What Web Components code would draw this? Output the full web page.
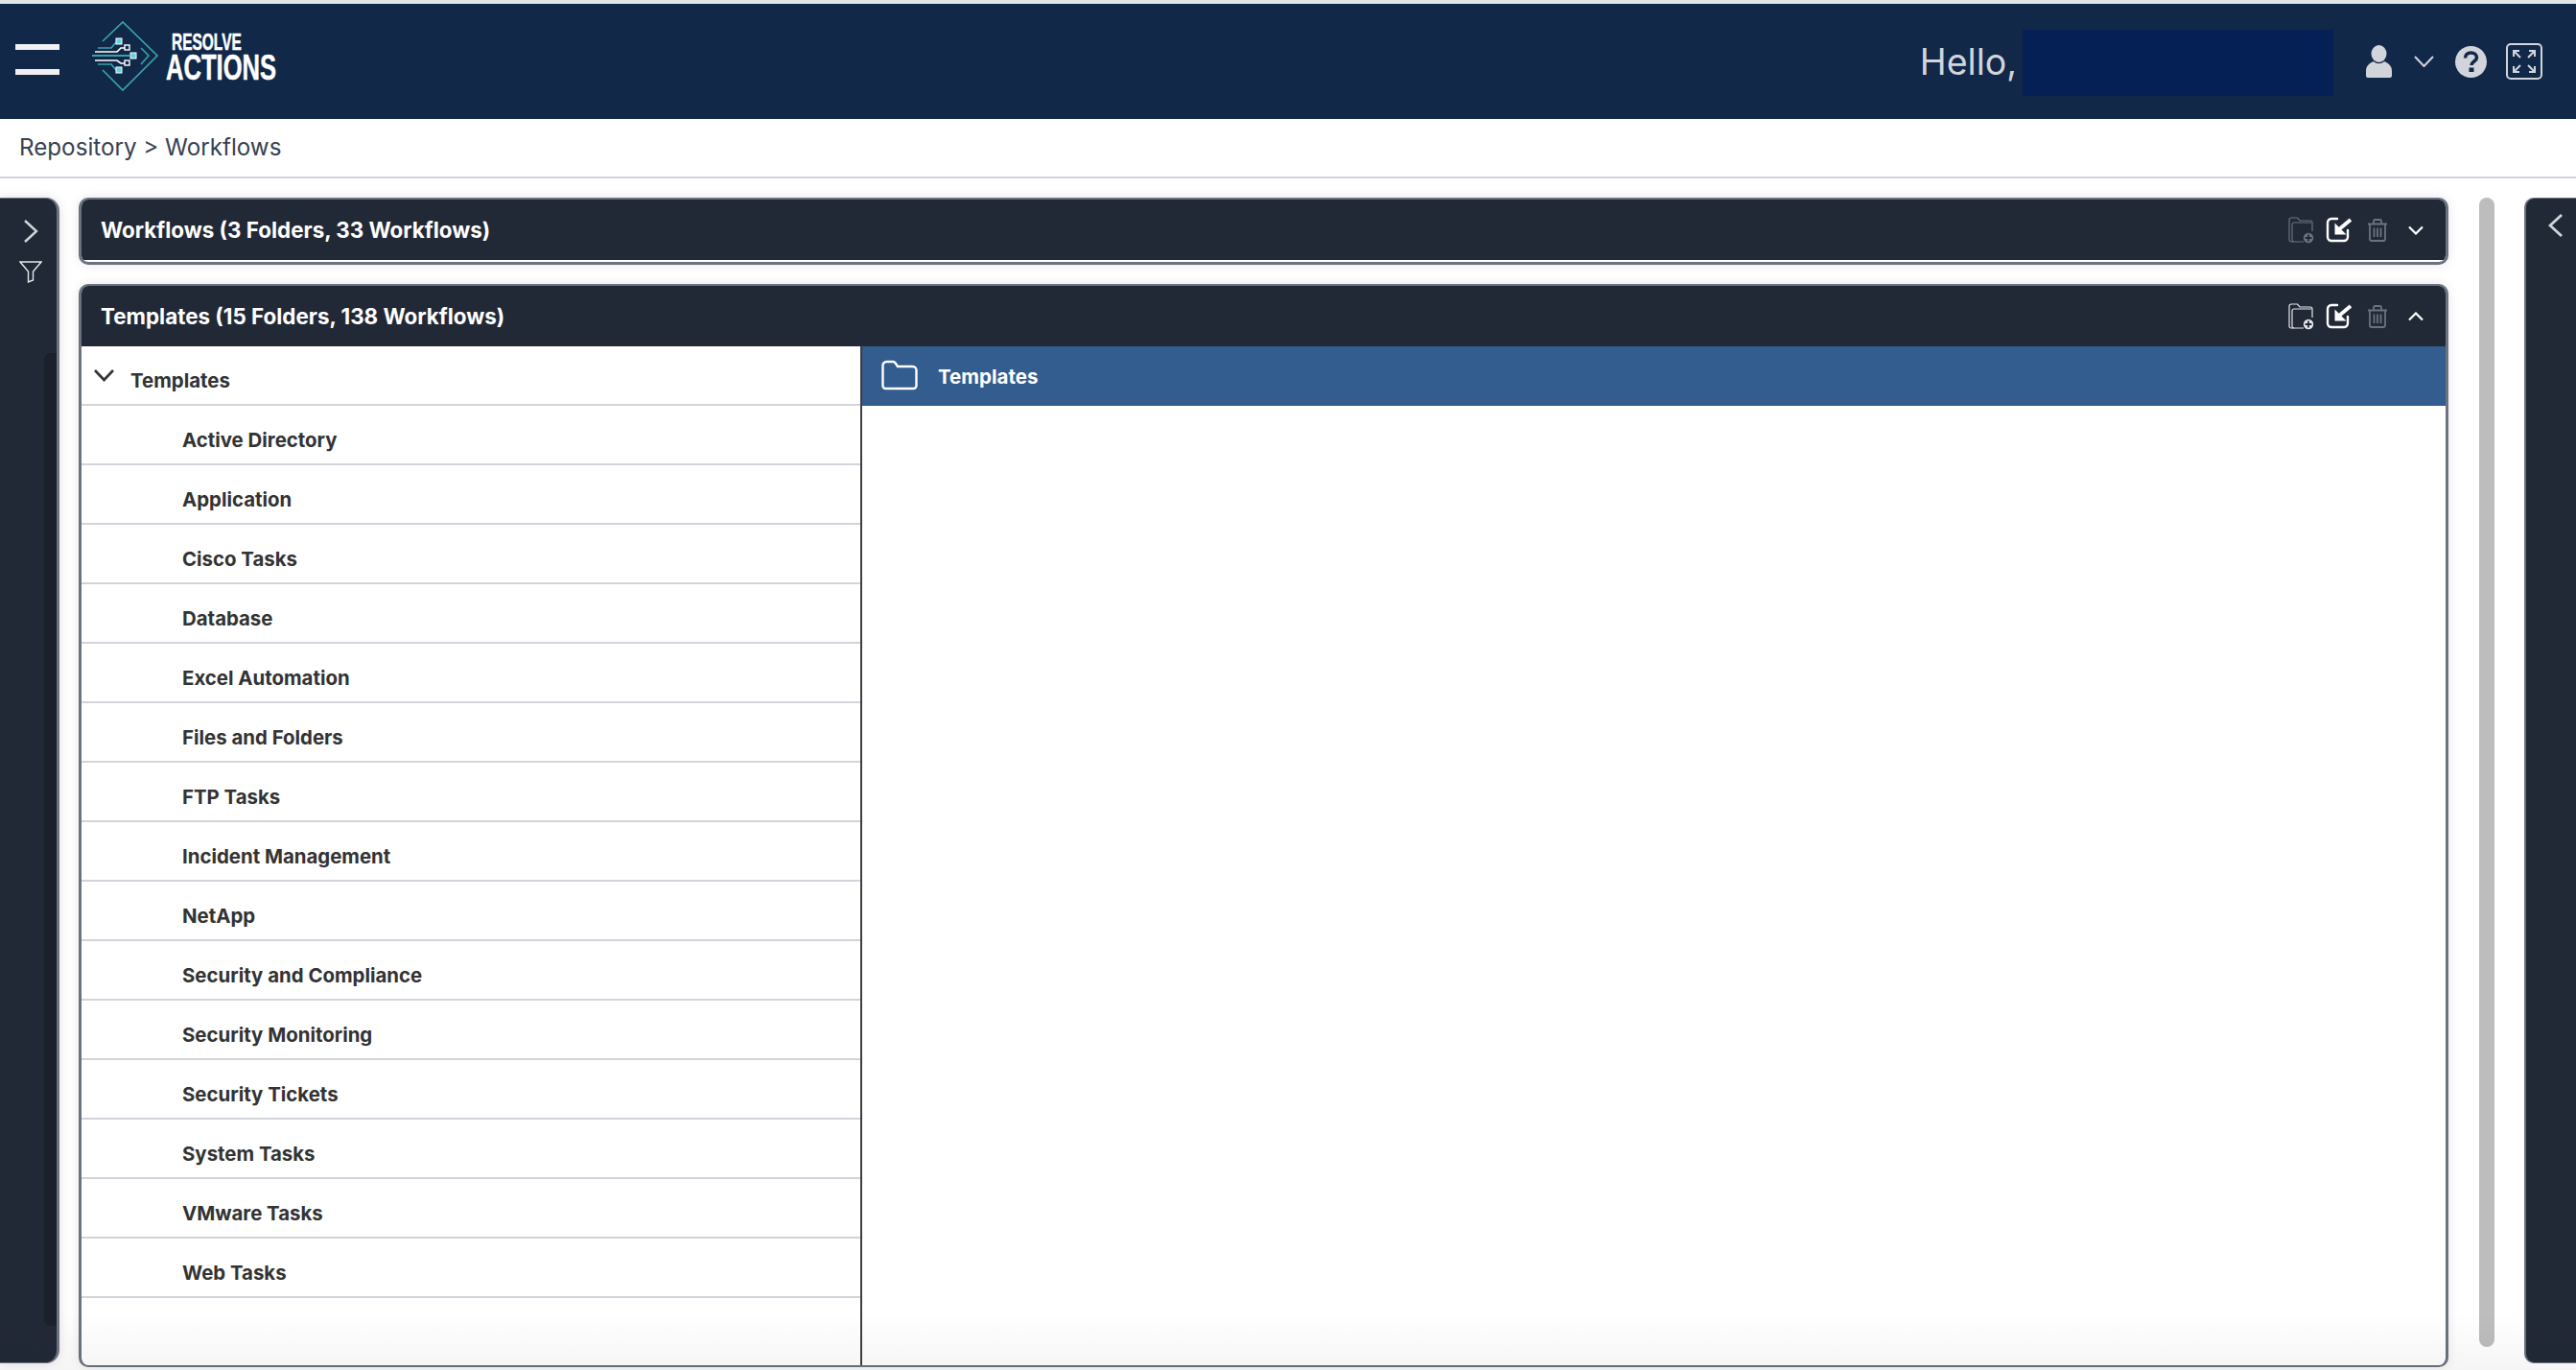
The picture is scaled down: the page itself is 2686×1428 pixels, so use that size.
<!DOCTYPE html>
<html lang="en">
<head>
<meta charset="utf-8">
<title>Repository - Workflows</title>
<style>
  html, body { margin: 0; height: 100%; background: #fff; }
  body { overflow: hidden; font-family: Inter, "Liberation Sans", sans-serif; }
</style>
</head>
<body>
<app-shell>
  <top-bar slot="top"></top-bar>
  <bread-crumb slot="top">Repository &gt; Workflows</bread-crumb>
  <side-rail slot="left" side="left"></side-rail>
  <repo-panel slot="main" collapsed label="Workflows (3 Folders, 33 Workflows)"></repo-panel>
  <repo-panel slot="main" label="Templates (15 Folders, 138 Workflows)">
    <folder-tree slot="tree" label="Templates">
      <tree-row>Active Directory</tree-row>
      <tree-row>Application</tree-row>
      <tree-row>Cisco Tasks</tree-row>
      <tree-row>Database</tree-row>
      <tree-row>Excel Automation</tree-row>
      <tree-row>Files and Folders</tree-row>
      <tree-row>FTP Tasks</tree-row>
      <tree-row>Incident Management</tree-row>
      <tree-row>NetApp</tree-row>
      <tree-row>Security and Compliance</tree-row>
      <tree-row>Security Monitoring</tree-row>
      <tree-row>Security Tickets</tree-row>
      <tree-row>System Tasks</tree-row>
      <tree-row>VMware Tasks</tree-row>
      <tree-row>Web Tasks</tree-row>
    </folder-tree>
    <folder-view slot="view" label="Templates"></folder-view>
  </repo-panel>
  <side-rail slot="right" side="right"></side-rail>
</app-shell>

<script>
// small helper, every element just stamps its own template into an open root
function stamp(el, html) {
  const tmpl = document.createElement("template");
  tmpl.innerHTML = html;
  el.attachShadow({ mode: "open" });
  el.shadowRoot.appendChild(tmpl.content.cloneNode(true));
}

const folderPlus = `<svg width="28" height="28" viewBox="0 0 28 28" fill="none" stroke="currentColor" stroke-width="1.2">
  <path d="M17 26H4a2 2 0 0 1-2-2V3a2 2 0 0 1 2-2h6.5l2.5 3h11a2 2 0 0 1 2 2v9"/>
  <path d="M7 26a2 2 0 0 1-2-2V8a2 2 0 0 1 2-2h18"/>
  <circle cx="22" cy="22" r="5.2" fill="currentColor" stroke="none"/>
  <path d="M22 18.6v6.8M18.6 22h6.8" stroke="#222936" stroke-width="1.8"/>
</svg>`;

const importIcon = `<svg width="28" height="28" viewBox="0 0 28 28" fill="none" stroke="#fff" stroke-width="2.4">
  <path d="M12 2H6a4 4 0 0 0-4 4v15a4 4 0 0 0 4 4h13a4 4 0 0 0 4-4v-7" stroke-linecap="round"/>
  <path d="M14 13L26 3" stroke-width="3.8"/>
  <path d="M9.500 6.500v12h12z" fill="#fff" stroke="none"/>
</svg>`;

const trashIcon = `<svg width="24" height="26" viewBox="0 0 24 26" fill="none" stroke="#6b7280" stroke-width="1.8">
  <path d="M2 6.500h20M8 6V3.500a1.500 1.500 0 0 1 1.500-1.500h5A1.500 1.500 0 0 1 16 3.500V6" />
  <path d="M4 6.500V22a2 2 0 0 0 2 2h12a2 2 0 0 0 2-2V6.500"/>
  <path d="M8.500 10.500V20M12 10.500V20M15.500 10.500V20"/>
</svg>`;

class AppShell extends HTMLElement {
  constructor() {
    super();
    stamp(this, `
      <style>
        :host { display: flex; flex-direction: column; height: 100vh; position: relative; overflow: hidden; }
        .body { flex: 1; min-height: 0; display: flex; padding-top: 20px; }
        .left { display: block; width: 62px; flex: none; }
        .main { width: 2471px; margin-left: 20px; flex: none; display: flex; flex-direction: column; gap: 20px; padding-bottom: 3px; box-sizing: border-box; }
        .bar { width: 16px; height: 1198px; margin-left: 32px; flex: none; border-radius: 8px; background: #bdbdbd; }
        .right { margin-left: 31px; flex: 1; }
        .fade { position: absolute; left: 0; right: 0; bottom: 0; height: 60px; pointer-events: none;
          background: linear-gradient(rgba(0,0,0,0), rgba(0,0,0,.04)); }
      </style>
      <slot name="top"></slot>
      <div class="body">
        <div class="left"><slot name="left"></slot></div>
        <div class="main"><slot name="main"></slot></div>
        <div class="bar"></div>
        <div class="right"><slot name="right"></slot></div>
      </div>
      <div class="fade"></div>`);
  }
}

class TopBar extends HTMLElement {
  constructor() {
    super();
    stamp(this, `
      <style>
        :host { display: flex; align-items: center; height: 120px; border-top: 4px solid #e3e3e3; background: #112848; color: #d1d5db; flex: none; }
        .burger { width: 46px; height: 32px; margin-left: 16px; flex: none; border-top: 6px solid #eef0f2; border-bottom: 6px solid #eef0f2; box-sizing: border-box; margin-top: -4px; }
        .mark { margin: -12px 0 0 33px; flex: none; display: block; }
        .word { margin-left: 6px; width: 120px; color: #fff; font-family: "Liberation Sans", sans-serif; font-weight: 700; margin-top: -9px; -webkit-text-stroke: .5px #fff; }
        .word div { transform-origin: left center; white-space: nowrap; }
        .r { font-size: 24px; line-height: 22px; transform: scaleX(.645); margin-left: 6px; }
        .a { font-size: 36px; line-height: 30px; transform: scaleX(.71); margin-top: 1px; }
        .hello { margin-left: auto; font-size: 37.500px; font-weight: 400; line-height: 1; margin-top: 2px; }
        .who { width: 324px; height: 69px; margin-left: 6px; background: #052055; margin-top: 3px; }
        .ic { display: block; flex: none; }
      </style>
      <div class="burger"></div>
      <svg class="mark" width="72" height="76" viewBox="0 0 72 76" fill="none" stroke="#36a3aa" stroke-width="1.7">
        <path d="M12 23L33 3L69 38L33 74L12 53"/>
        <path d="M52 30l8 8-8 9" stroke-width="1.6"/>
        <path d="M1 38H40" stroke-width="2"/>
        <path d="M4 34H27l4-4h4M4 43H27l4 3h4" stroke="#fff"/>
        <path d="M7 30H21l5-6M7 47H21l5 6"/>
        <rect x="26" y="20" width="6" height="6" fill="#5fd3dc" stroke="#fff" stroke-width="1"/>
        <rect x="26" y="50" width="6" height="6" fill="#5fd3dc" stroke="#fff" stroke-width="1"/>
        <rect x="41" y="35" width="6" height="6" fill="#5fd3dc" stroke="#fff" stroke-width="1"/>
        <rect x="35" y="27" width="5" height="5" stroke="#fff" stroke-width="1.4"/>
        <rect x="35" y="43" width="5" height="5" stroke="#fff" stroke-width="1.4"/>
      </svg>
      <div class="word"><div class="r">RESOLVE</div><div class="a">ACTIONS</div></div>
      <div class="hello">Hello,</div>
      <div class="who"></div>
      <svg class="ic" style="margin-left:34px" width="27" height="34" viewBox="0 0 27 34" fill="#d1d5db">
        <ellipse cx="13.500" cy="9" rx="8" ry="9"/>
        <path d="M8 17c-5 2-8 5-8 10v5a2 2 0 0 0 2 2h23a2 2 0 0 0 2-2v-5c0-5-3-8-8-10-3 3-8 3-11 0z"/>
      </svg>
      <svg class="ic" style="margin-left:23px" width="21" height="12" viewBox="0 0 21 12" fill="none" stroke="#d1d5db" stroke-width="2"><path d="M1 1l9.500 10L20 1"/></svg>
      <svg class="ic" style="margin-left:22px" width="33" height="33" viewBox="0 0 33 33">
        <circle cx="16.500" cy="16.500" r="16.500" fill="#d1d5db"/>
        <path d="M10.500 12.500c0-3.500 2.700-5.500 6-5.500s6 2 6 5c0 4-5.500 4-5.500 8" fill="none" stroke="#112848" stroke-width="3.600"/>
        <rect x="14.500" y="22.500" width="5" height="4.500" fill="#112848"/>
      </svg>
      <svg class="ic" style="margin:0 35px 0 20px" width="38" height="38" viewBox="0 0 38 38" fill="none" stroke="#d1d5db" stroke-width="2">
        <rect x="1" y="1" width="36" height="36" rx="4"/>
        <path d="M8 8l7 7M8 14V8h6M30 8l-7 7M30 14V8h-6M8 30l7-7M8 24v6h6M30 30l-7-7M30 24v6h-6"/>
      </svg>`);
  }
}

class BreadCrumb extends HTMLElement {
  constructor() {
    super();
    stamp(this, `
      <style>
        :host { display: flex; align-items: center; flex: none; padding: 0 0 2px 20px; box-sizing: border-box;
          border-bottom: 2px solid #d1d5db; height: 62px; font-size: 24.200px; color: #374151; }
      </style>
      <slot></slot>`);
  }
}

class SideRail extends HTMLElement {
  constructor() {
    super();
    const left = this.getAttribute("side") === "left";
    stamp(this, left ? `
      <style>
        :host { display: block; position: relative; height: 1215px; box-sizing: border-box; padding-top: 22px; background: #222936;
          border-right: 3px solid #6b7280; border-top: 1px solid #6b7280; border-bottom: 1px solid #6b7280; border-radius: 0 14px 14px 0; box-shadow: 0 0 12px rgba(0,0,0,.12); }
        svg { display: block; }
        .chev { margin-left: 24px; }
        .filter { margin: 19px 0 0 20px; }
        .thumb { position: absolute; left: 46px; top: 161px; width: 13px; height: 1014px; border-radius: 7px 0 0 7px; background: #1a212b; }
      </style>
      <svg class="chev" width="16" height="24" viewBox="0 0 16 24" fill="none" stroke="#d1d5db" stroke-width="2.400"><path d="M2 1l12 11L2 23"/></svg>
      <svg class="filter" width="24" height="23" viewBox="0 0 24 23" fill="none" stroke="#e5e7eb" stroke-width="1.400"><path d="M1 1h22l-8.500 10v9l-5 2V11z"/></svg>
      <div class="thumb"></div>` : `
      <style>
        :host { display: block; height: 1215px; box-sizing: border-box; padding-top: 16px; background: #222936;
          border-left: 2px solid #6b7280; border-top: 1px solid #6b7280; border-bottom: 1px solid #6b7280; border-radius: 10px 0 0 10px; }
        svg { display: block; margin-left: 23px; }
      </style>
      <svg width="16" height="24" viewBox="0 0 16 24" fill="none" stroke="#d1d5db" stroke-width="2.800"><path d="M14 1L2 12l12 11"/></svg>`);
  }
}

class RepoPanel extends HTMLElement {
  constructor() {
    super();
    const collapsed = this.hasAttribute("collapsed");
    stamp(this, `
      <style>
        :host { display: flex; flex-direction: column; box-sizing: border-box; border: 3px solid #6b7280; border-top-width: 2px; border-radius: 10px;
          background: #fff; box-shadow: 0 0 12px rgba(0,0,0,.1); overflow: hidden; flex: none; }
        :host(:not([collapsed])) { flex: 1; min-height: 0; border-bottom-width: 2px; }
        .head { display: flex; align-items: center; height: 63px; flex: none; padding: 0 23px 0 20px; background: #222936; color: #fff;
          font-size: 22.400px; font-weight: 700; }
        :host([collapsed]) .head { border-bottom: 2px solid #fff; box-sizing: content-box; }
        .title { flex: 1; }
        .dim { color: #6b7280; }
        .lit { color: #e5e7eb; }
        svg { display: block; flex: none; }
        .body { flex: 1; min-height: 0; display: flex; }
        .tree { display: block; width: 812px; flex: none; border-right: 2px solid #3f3f3f; }
        .view { display: block; flex: 1; }
      </style>
      <div class="head">
        <div class="title">${this.getAttribute("label")}</div>
        <span class="${collapsed ? "dim" : "lit"}">${folderPlus}</span>
        <span style="margin-left:12px">${importIcon}</span>
        <span style="margin-left:14px">${trashIcon}</span>
        <svg style="margin-left:20px" width="16" height="10" viewBox="0 0 16 10" fill="none" stroke="#fff" stroke-width="2.200"><path d="${collapsed ? "M1 1.500l7 7 7-7" : "M1 8.500l7-7 7 7"}"/></svg>
      </div>
      ${collapsed ? "" : `<div class="body">
        <div class="tree"><slot name="tree"></slot></div>
        <div class="view"><slot name="view"></slot></div>
      </div>`}`);
  }
}

class FolderTree extends HTMLElement {
  constructor() {
    super();
    stamp(this, `
      <style>
        :host { display: block; color: #333; font-size: 20.400px; font-weight: 650; }
        .root { display: flex; align-items: center; height: 60px; border-bottom: 2px solid #d1d5db; padding-left: 13px; }
        svg { display: block; margin-right: 17px; }
        span { margin-top: 10px; }
      </style>
      <div class="root">
        <svg width="21" height="13" viewBox="0 0 21 13" fill="none" stroke="#333" stroke-width="2.600"><path d="M1 1l9.500 10L20 1"/></svg>
        <span>${this.getAttribute("label")}</span>
      </div>
      <slot></slot>`);
  }
}

class TreeRow extends HTMLElement {
  constructor() {
    super();
    stamp(this, `
      <style>
        :host { display: flex; align-items: center; height: 62px; box-sizing: border-box; padding: 10px 0 0 105px; border-bottom: 2px solid #d1d5db; }
      </style>
      <slot></slot>`);
  }
}

class FolderView extends HTMLElement {
  constructor() {
    super();
    stamp(this, `
      <style>
        :host { display: block; }
        .crumb { display: flex; align-items: center; height: 62px; padding-left: 20px; background: #335c8f; color: #fff; font-size: 20.500px; font-weight: 700; }
        svg { display: block; margin: -3px 21px 0 0; }
      </style>
      <div class="crumb">
        <svg width="38" height="32" viewBox="0 0 38 32" fill="none" stroke="#fff" stroke-width="2.400"><path d="M1.500 6a4 4 0 0 1 4-4H12a3 3 0 0 1 2.500 1.300L17 7h15.500a4 4 0 0 1 4 4v16a3 3 0 0 1-3 3h-29a3 3 0 0 1-3-3z"/></svg>
        <span>${this.getAttribute("label")}</span>
      </div>`);
  }
}

// define children first so parents find them ready
customElements.define("tree-row", TreeRow);
customElements.define("folder-tree", FolderTree);
customElements.define("folder-view", FolderView);
customElements.define("repo-panel", RepoPanel);
customElements.define("side-rail", SideRail);
customElements.define("bread-crumb", BreadCrumb);
customElements.define("top-bar", TopBar);
customElements.define("app-shell", AppShell);
</script>
</body>
</html>
